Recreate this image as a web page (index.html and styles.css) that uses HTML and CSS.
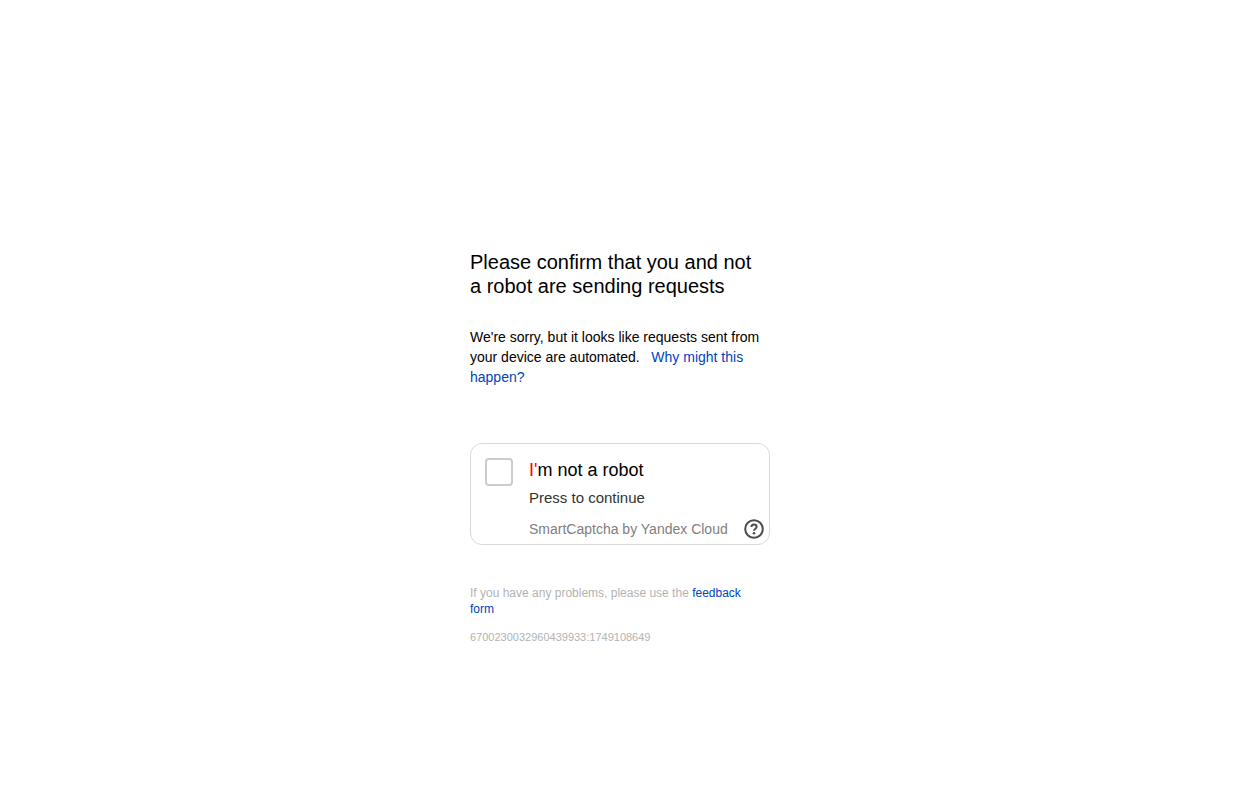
FILE: index.html
```html
<!DOCTYPE html>
<html lang="en">

<head>
	<meta charset="utf-8">
	<meta name="viewport" content="width=device-width, initial-scale=1">
	<title>Are you not a robot?</title>
	<link rel="stylesheet" href="styles.css">
</head>

<body>
	<main class="container">
		<form class="content" action="#" method="post">
			<h1 class="title">Please confirm that you and not a&nbsp;robot are sending requests</h1>
			<p class="text">We're sorry, but it looks like requests sent from your device are automated. &nbsp; <a class="link" href="#">Why might this happen?</a></p>
			<div class="captcha">
				<input class="captcha-button" type="checkbox" id="not-robot" aria-describedby="captcha-hint">
				<div class="captcha-body">
					<label class="captcha-label" for="not-robot">I'm not a robot</label>
					<span class="captcha-hint" id="captcha-hint">Press to continue</span>
					<div class="captcha-footer">
						<a class="captcha-link" href="#">SmartCaptcha by Yandex Cloud</a>
						<button class="captcha-help" type="button" aria-label="Help">
							<svg width="20" height="20" viewBox="0 0 20 20" fill="none" stroke="currentColor" stroke-width="2">
								<circle cx="10" cy="10" r="8.8" />
								<path d="M7.4 8C7.4 6.5 8.5 5.5 10 5.5s2.6 1 2.6 2.4c0 1.8-2.6 1.9-2.6 3.9" />
								<circle cx="10" cy="14.2" r="1.3" fill="currentColor" stroke="none" />
							</svg>
						</button>
					</div>
				</div>
			</div>
			<p class="feedback">If you have any problems, please use the <a class="link" href="#">feedback form</a></p>
			<p class="request-id">6700230032960439933:1749108649</p>
		</form>
	</main>
</body>

</html>
```

FILE: styles.css
```css
* {
	box-sizing: border-box;
	margin: 0;
	padding: 0;
}

body {
	font-family: "Liberation Sans", Arial, sans-serif;
	color: #000;
	background: #fff;
}

.container {
	display: flex;
	align-items: center;
	justify-content: center;
	min-height: 100vh;
	padding: 20px;
}

.content {
	width: 100%;
	max-width: 300px;
	padding-top: 94px;
}

.title {
	font-size: 20px;
	line-height: 24px;
	font-weight: normal;
	margin-bottom: 29px;
}

.text {
	font-size: 14px;
	line-height: 20px;
	margin-bottom: 56px;
}

.link {
	color: #04b;
	text-decoration: none;
}

/* captcha box */
.captcha {
	display: flex;
	gap: 16px;
	border: 1px solid #d9d9d9;
	border-radius: 12px;
	padding: 14px 5px 5px 14px;
	margin-bottom: 40px;
}

.captcha-button {
	appearance: none;
	flex: none;
	width: 28px;
	height: 28px;
	border: 2px solid #ccc;
	border-radius: 4px;
	background: #fff;
	cursor: pointer;
}

.captcha-body {
	flex: 1;
	display: flex;
	flex-direction: column;
}

.captcha-label {
	font-size: 18px;
	line-height: 24px;
	margin-bottom: 6px;
}

.captcha-label::first-letter {
	color: #f00;
}

.captcha-hint {
	font-size: 15px;
	line-height: 20px;
	color: #333;
	margin-bottom: 11px;
}

.captcha-footer {
	display: flex;
	align-items: center;
	justify-content: space-between;
}

.captcha-link {
	font-size: 14px;
	line-height: 20px;
	color: #808080;
	text-decoration: none;
}

.captcha-help {
	width: 20px;
	height: 20px;
	border: 0;
	background: none;
	color: #4d4d4d;
	cursor: pointer;
}

.captcha-help svg {
	display: block;
}

.feedback {
	font-size: 12px;
	line-height: 16px;
	color: #b3b3b3;
	padding-right: 16px;
	margin-bottom: 12px;
}

.request-id {
	font-size: 11px;
	line-height: 16px;
	color: #b3b3b3;
}
```
